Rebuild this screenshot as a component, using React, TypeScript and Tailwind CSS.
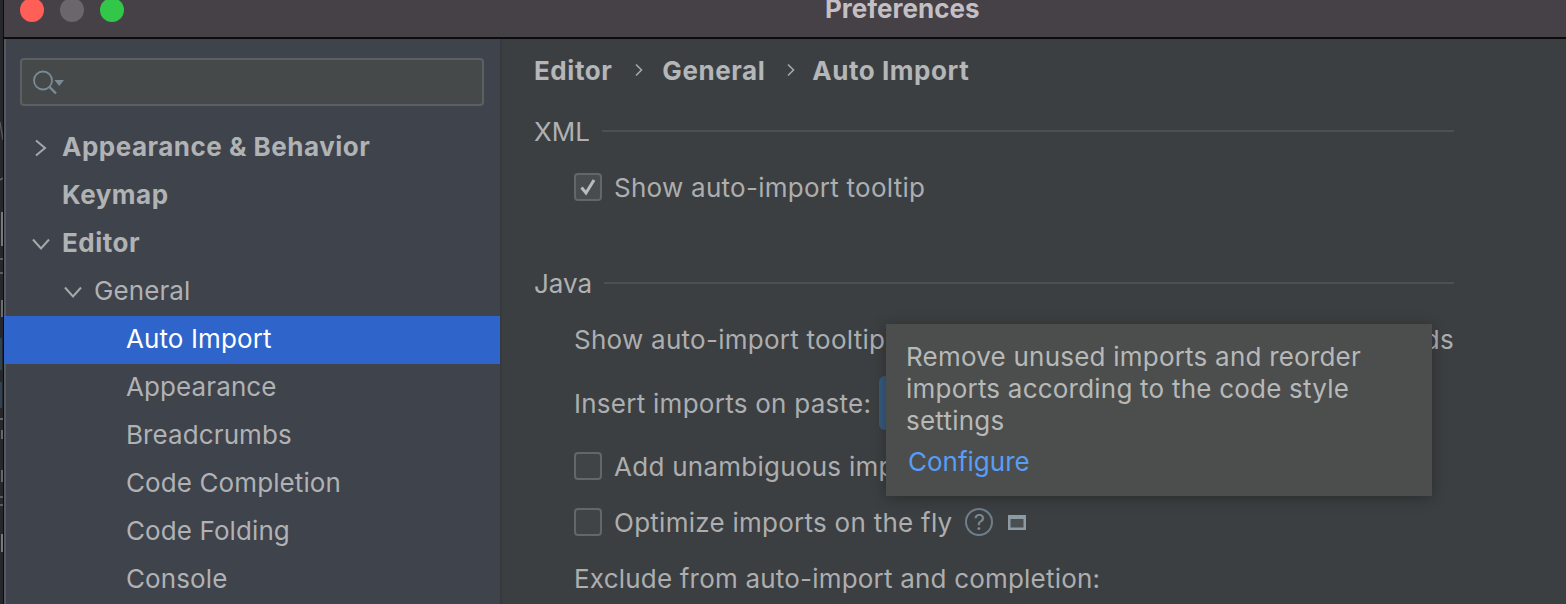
const font = { fontFamily: "Inter, 'Noto Sans', sans-serif" };

function Chevron({ dir }: { dir: "right" | "down" }) {
  return (
    <svg width="20" height="20" viewBox="0 0 20 20" fill="none">
      <path
        d={dir === "right" ? "M5 2.5 L14 10 L5 17.5" : "M2 5.5 L10 14.5 L18 5.5"}
        stroke="#a5a8ab"
        strokeWidth="2"
      />
    </svg>
  );
}

function TreeRow({
  label,
  indent,
  bold,
  selected,
  chevron,
  chevronLeft,
}: {
  label: string;
  indent: string;
  bold?: boolean;
  selected?: boolean;
  chevron?: "right" | "down";
  chevronLeft?: string;
}) {
  return (
    <div
      className={`relative flex h-12 items-center pb-1 text-[26px] ${indent} ${
        selected ? "bg-[#2f65ca] text-white" : "text-[#b0b2b4]"
      } ${bold ? "font-bold tracking-[0.5px]" : "tracking-[0.1px]"}`}
    >
      {chevron && (
        <span className={`absolute top-[14px] ${chevronLeft}`}>
          <Chevron dir={chevron} />
        </span>
      )}
      {label}
    </div>
  );
}

function Check({ checked }: { checked?: boolean }) {
  return (
    <span
      className={`flex h-7 w-7 shrink-0 items-center justify-center rounded-[4px] border-2 border-[#646769] ${
        checked ? "bg-[#484c4e]" : "bg-[#404446]"
      }`}
    >
      {checked && (
        <svg width="20" height="20" viewBox="0 0 20 20" fill="none">
          <path d="M3.5 10.5 L8 16 L16 3" stroke="#b9bbbd" strokeWidth="3" />
        </svg>
      )}
    </span>
  );
}

function Section({ label, gap }: { label: string; gap: string }) {
  return (
    <div className={`flex h-8 items-center ${gap} text-[26px] tracking-normal text-[#afb1b3]`}>
      <span>{label}</span>
      <span className="h-[2px] flex-1 bg-[#4d4f50]" />
    </div>
  );
}

function Crumb({ ml, mr }: { ml: string; mr: string }) {
  return (
    <svg width="10" height="14" viewBox="0 0 10 14" fill="none" className={`${ml} ${mr}`}>
      <path d="M2 1.5 L7.5 7 L2 12.5" stroke="#a5a8ab" strokeWidth="1.6" />
    </svg>
  );
}

function EdgeMarks() {
  return (
    <svg width="3" height="604" viewBox="0 0 3 604" fill="none">
      <path d="M0 122 L3 140" stroke="#55565a" strokeWidth="1.5" />
      <path d="M0 180 L3 178" stroke="#66676a" strokeWidth="1.5" />
      <rect x="1" y="212" width="2" height="34" fill="#77787b" />
      <rect x="0" y="258" width="3" height="2" fill="#5c5d60" />
      <rect x="0" y="272" width="3" height="2" fill="#5c5d60" />
      <rect x="1" y="300" width="2" height="17" fill="#6b6c6f" />
      <path d="M1 338 V370 M1 382 V408" stroke="#2e4252" strokeWidth="2" />
      <rect x="0" y="418" width="3" height="2" fill="#66676a" />
      <rect x="1" y="430" width="2" height="9" fill="#66676a" />
      <rect x="1" y="470" width="2" height="12" fill="#66676a" />
      <rect x="0" y="496" width="3" height="2" fill="#5c5d60" />
      <rect x="0" y="504" width="3" height="2" fill="#5c5d60" />
      <rect x="1" y="534" width="2" height="18" fill="#77787b" />
    </svg>
  );
}

export default function App() {
  return (
    <div className="relative flex h-[604px] w-[1566px] overflow-hidden bg-[#2a2b2d]" style={font}>
      <div className="w-[3px] shrink-0 bg-[#26272a]">
        <EdgeMarks />
      </div>
      <div className="flex flex-1 flex-col border-l border-[#0c0c0c]">
        <div className="relative h-[39px] shrink-0 border-b-2 border-[#0c0c0c] bg-[#464146]">
          <div className="absolute left-4 top-[-2px] flex gap-4">
            <span className="h-6 w-6 rounded-full bg-[#ff5f57]" />
            <span className="h-6 w-6 rounded-full bg-[#6b666b]" />
            <span className="h-6 w-6 rounded-full bg-[#32c748]" />
          </div>
          <div className="absolute left-[821px] top-[-9px] text-[26px] font-bold leading-[36px] text-[#c3bfc4]">
            Preferences
          </div>
        </div>
        <div className="flex min-h-0 flex-1">
          <div className="w-[498px] shrink-0 border-r-2 border-[#36393e] bg-[#3f434c] pt-[19px] shadow-[inset_2px_0_0_#555962]">
            <div className="ml-4 mr-4 flex h-12 items-center rounded-[4px] border-2 border-[#5d6062] bg-[#454949] pl-[10px]">
              <svg width="34" height="26" viewBox="0 0 34 26" fill="none">
                <circle cx="11" cy="11.5" r="9" stroke="#7b8a94" strokeWidth="1.8" />
                <path d="M17.5 18 L24 24.5" stroke="#7b8a94" strokeWidth="2.4" />
                <path d="M22.5 11 H32 L27.2 17 Z" fill="#7b8a94" />
              </svg>
            </div>
            <div className="mt-[18px]">
              <TreeRow label="Appearance & Behavior" indent="pl-[58px]" bold chevron="right" chevronLeft="left-[27px]" />
              <TreeRow label="Keymap" indent="pl-[58px]" bold />
              <TreeRow label="Editor" indent="pl-[58px]" bold chevron="down" chevronLeft="left-[27px]" />
              <TreeRow label="General" indent="pl-[90px]" chevron="down" chevronLeft="left-[59px]" />
              <TreeRow label="Auto Import" indent="pl-[122px]" selected />
              <TreeRow label="Appearance" indent="pl-[122px]" />
              <TreeRow label="Breadcrumbs" indent="pl-[122px]" />
              <TreeRow label="Code Completion" indent="pl-[122px]" />
              <TreeRow label="Code Folding" indent="pl-[122px]" />
              <TreeRow label="Console" indent="pl-[122px]" />
            </div>
          </div>
          <div className="flex-1 bg-[#3c3f41] pl-[32px] pr-[112px] pt-[13px] text-[26px] tracking-[0.26px] text-[#acaeb0]">
            <div className="flex h-9 items-center font-bold tracking-[0.55px] text-[#b4b6b8]">
              <span>Editor</span>
              <Crumb ml="ml-[22px]" mr="mr-[18px]" />
              <span>General</span>
              <Crumb ml="ml-[21px]" mr="mr-[16px]" />
              <span>Auto Import</span>
            </div>
            <div className="mt-[27px]">
              <Section label="XML" gap="gap-3" />
            </div>
            <div className="mt-[24px] ml-[40px] flex h-8 items-center gap-3">
              <Check checked />
              <span>Show auto-import tooltip</span>
            </div>
            <div className="mt-[64px]">
              <Section label="Java" gap="gap-3" />
            </div>
            <div className="mt-[24px] ml-[40px] flex h-8 items-center justify-between">
              <span>Show auto-import tooltip for classes,</span>
              <span>static methods and fields</span>
            </div>
            <div className="mt-[32px] ml-[40px] flex h-8 items-center gap-2">
              <span>Insert imports on paste:</span>
              <span className="h-[54px] w-[40px] rounded-[6px] bg-[#365a7e]" />
            </div>
            <div className="mt-[31px] ml-[40px] flex h-8 items-center gap-3">
              <Check />
              <span>Add unambiguous imports on the fly</span>
            </div>
            <div className="mt-6 ml-[40px] flex h-8 items-center gap-3">
              <Check />
              <span>Optimize imports on the fly</span>
              <span className="ml-px flex h-7 w-7 items-center justify-center rounded-full border-2 border-[#6f7f8a] text-[22px] leading-none text-[#7d8b95]">
                ?
              </span>
              <svg width="18" height="15" viewBox="0 0 18 15" className="ml-[3px]">
                <rect x="0" y="0" width="18" height="15" fill="#8c9aa3" />
                <rect x="2.5" y="4" width="13" height="8.5" fill="#4a4f52" />
              </svg>
            </div>
            <div className="mt-6 ml-[40px] flex h-8 items-center tracking-[0.2px]">
              <span>Exclude from auto-import and completion:</span>
            </div>
          </div>
        </div>
      </div>
      <div className="absolute left-[886px] top-[324px] h-[172px] w-[546px] bg-[#4c4e4d] pl-5 pt-[17px] text-[26px] leading-[32px] tracking-[0.22px] text-[#b7b9b9] shadow-[0_2px_14px_rgba(0,0,0,0.3)]">
        <div>Remove unused imports and reorder</div>
        <div>imports according to the code style</div>
        <div>settings</div>
        <div className="ml-[2px] mt-[9px] tracking-normal text-[#589df6]">Configure</div>
      </div>
    </div>
  );
}
